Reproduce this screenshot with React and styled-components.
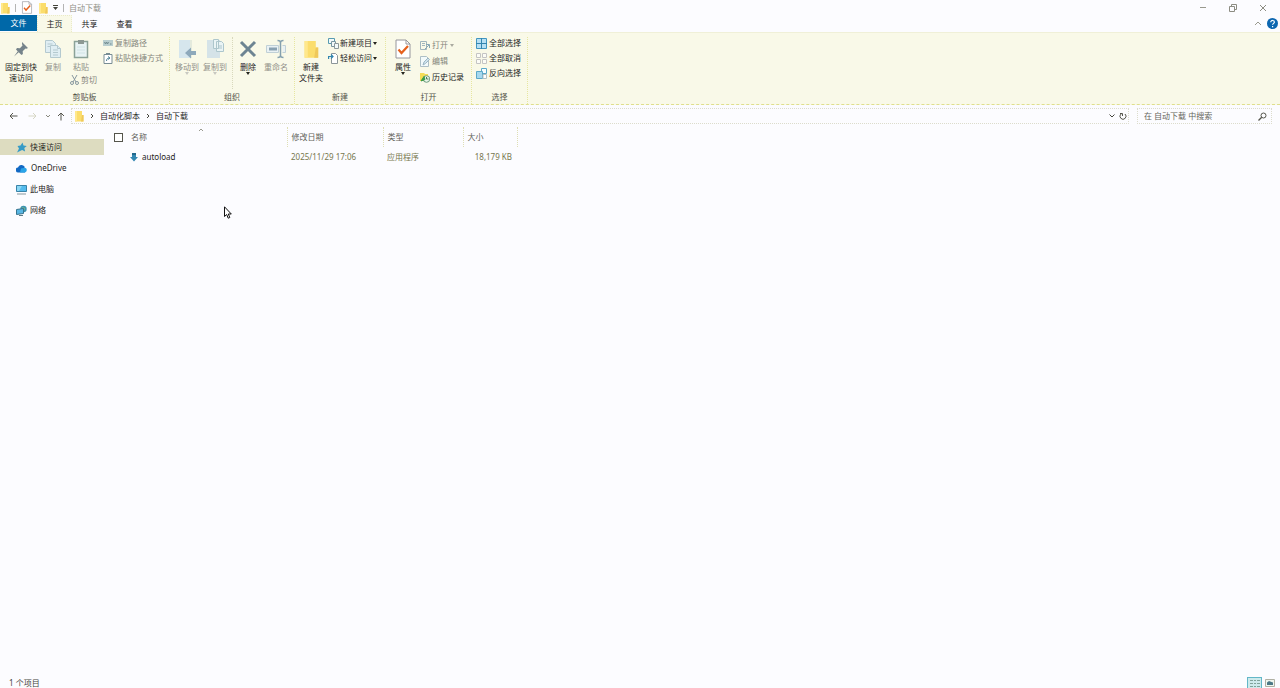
import React from "react";
import styled, { createGlobalStyle, css } from "styled-components";

const Global = createGlobalStyle`
  *, *::before, *::after { box-sizing: border-box; }
  body {
    margin: 0;
    background: #fcfcff;
    color: #24241c;
    font: 8px/12px "Noto Sans", "Noto Sans CJK SC", sans-serif;
  }
  button, input { font: inherit; color: inherit; }
  svg { display: block; flex: none; }
`;

const RIBBON = "#f9f9e8";
const LINE = "#eaeac8";

const Window = styled.div`
  display: flex;
  flex-direction: column;
  min-height: 100vh;
`;

const Plain = styled.button`
  display: flex;
  align-items: center;
  justify-content: center;
  margin: 0;
  padding: 0;
  border: 0;
  background: none;
  white-space: nowrap;
`;

const TitleBar = styled.header`
  display: flex;
  align-items: center;
  height: 15px;
  padding-right: 2px;
`;

const QuickBar = styled.div`
  display: flex;
  align-items: center;
  flex: 1;
  gap: 5px;
`;

const Divider = styled.span`
  width: 1px;
  height: 8px;
  background: #b4b4b4;
`;

const Title = styled.h1`
  margin: 0;
  font-size: 8px;
  font-weight: 400;
  color: #8f8f86;
`;

const WindowButton = styled(Plain)`
  width: 30px;
  height: 15px;
`;

const TabBar = styled.nav`
  display: flex;
  height: 17px;
`;

const Tab = styled(Plain)`
  width: 35px;
  height: 17px;
  ${(p) => p.$kind === "active" && css`
    background: ${RIBBON};
    border: 1px dotted ${LINE};
    border-bottom: 0;
  `}
  ${(p) => p.$kind === "file" && css`
    width: 37px;
    height: 16px;
    background: #0068a8;
    color: #fff;
  `}
`;

const TabTools = styled.div`
  display: flex;
  align-items: center;
  gap: 5px;
  margin-left: auto;
  padding-right: 2px;
`;

const Ribbon = styled.section`
  display: flex;
  height: 73px;
  padding-top: 4px;
  background: ${RIBBON};
  border-top: 1px solid #f0f0d8;
  border-bottom: 1px dashed #dfdf8c;
`;

const Group = styled.div`
  display: flex;
  flex-direction: column;
  flex: none;
  width: ${(p) => p.$width}px;
  border-right: 1px dotted #e6e6a0;
`;

const GroupBody = styled.div`
  display: flex;
  align-items: flex-start;
  height: 54px;
  padding-left: ${(p) => p.$pad}px;
`;

const GroupLabel = styled.div`
  color: #55554a;
  text-align: center;
`;

const Big = styled(Plain)`
  flex-direction: column;
  justify-content: flex-start;
  width: ${(p) => p.$width || 28}px;
  line-height: 11px;
  color: ${(p) => (p.disabled ? "#92928a" : "#24241c")};
`;

const BigIcon = styled.span`
  display: flex;
  align-items: center;
  justify-content: center;
  height: 24px;
`;

const Column = styled.div`
  display: flex;
  flex-direction: column;
  align-items: flex-start;
  gap: ${(p) => p.$gap}px;
  padding: ${(p) => p.$top || 0}px 0 0 ${(p) => p.$left || 0}px;
`;

const Small = styled(Plain)`
  height: 12px;
  gap: ${(p) => p.$gap ?? 2}px;
  color: ${(p) => (p.disabled ? "#85857b" : "#24241c")};
`;

const InnerLine = styled.span`
  height: 52px;
  margin: 0 1px 0 3px;
  border-left: 1px dotted #d8d8bc;
`;

const NavBar = styled.div`
  display: flex;
  align-items: center;
  height: 22px;
  padding: 0 8px 0 7px;
`;

const NavButton = styled(Plain)`
  width: ${(p) => p.$width || 12}px;
  height: 14px;
`;

const Address = styled.div`
  display: flex;
  align-items: center;
  flex: 1;
  height: 16px;
  margin: 0 8px 0 0;
  padding-left: 2px;
  border: 1px dotted #dcdccc;
`;

const Crumb = styled.a`
  color: inherit;
  text-decoration: none;
`;

const CrumbArrow = styled.span`
  display: flex;
  justify-content: center;
  width: 16px;
`;

const AddressTools = styled.div`
  display: flex;
  margin-left: auto;
`;

const Search = styled.label`
  display: flex;
  align-items: center;
  width: 135px;
  height: 16px;
  padding: 0 4px 0 6px;
  border: 1px dotted #dcdccc;
`;

const SearchInput = styled.input`
  flex: 1;
  min-width: 0;
  padding: 0;
  border: 0;
  outline: 0;
  background: none;
  &::placeholder { color: #66665c; opacity: 1; }
`;

const Main = styled.main`
  display: flex;
  flex: 1;
`;

const Sidebar = styled.nav`
  display: flex;
  flex-direction: column;
  gap: 5px;
  width: 104px;
  padding-top: 12px;
`;

const Place = styled.a`
  display: flex;
  align-items: center;
  gap: 3px;
  height: 16px;
  padding-left: 16px;
  color: inherit;
  text-decoration: none;
  background: ${(p) => (p.$active ? "#dddcc0" : "none")};
`;

const Files = styled.table`
  table-layout: fixed;
  width: 413px;
  border-collapse: collapse;
  align-self: flex-start;
`;

const HeadCell = styled.th`
  position: relative;
  width: ${(p) => p.$width}px;
  height: 20px;
  padding: 0 4px 0 ${(p) => p.$pad ?? 4}px;
  border-right: ${(p) => (p.$line ? "1px dotted #dedeb4" : "0")};
  font-weight: 400;
  text-align: left;
  color: #62625a;
`;

const SortMark = styled.span`
  position: absolute;
  top: 0;
  left: 67px;
`;

const Cell = styled.td`
  height: 20px;
  padding: 0 5px 0 ${(p) => p.$pad ?? 4}px;
  color: #77774e;
  text-align: ${(p) => p.$align || "left"};
  white-space: nowrap;
`;

const FileName = styled.span`
  display: flex;
  align-items: center;
  gap: 3px;
  color: #24241c;
`;

const Check = styled.input`
  appearance: none;
  display: block;
  width: 9px;
  height: 9px;
  margin: 0 0 0 10px;
  border: 1px solid #55554c;
  background: #fff;
`;

const StatusBar = styled.footer`
  display: flex;
  align-items: center;
  justify-content: space-between;
  height: 10px;
  padding: 0 4px 0 9px;
  color: #44443c;
`;

const ViewButtons = styled.div`
  display: flex;
  gap: 1px;
`;

const ViewButton = styled(Plain)`
  width: 13px;
  height: 12px;
  ${(p) => p.$active && css`
    width: 15px;
    border: 1px solid #63b7c8;
    background: #cdeaec;
  `}
`;

const Pointer = styled.svg`
  position: absolute;
  left: 224px;
  top: 206px;
`;

/* Icons */

const Stroke = ({ d, w = 8, h = 8, color = "#44443c", width = 1 }) => (
  <svg width={w} height={h} viewBox={`0 0 ${w} ${h}`} fill="none" stroke={color} strokeWidth={width}>
    <path d={d} />
  </svg>
);

const Caret = ({ color = "#24241c" }) => (
  <svg width="4" height="3" viewBox="0 0 4 3"><path d="M0 0h4L2 3z" fill={color} /></svg>
);

const Folder = ({ w = 10, h = 12 }) => (
  <svg width={w} height={h} viewBox="0 0 10 12">
    <path d="M1 1h7v4h1.500v6.500H1z" fill="#fbdd6c" />
    <path d="M8 5h1.500v6.500H7z" fill="#efc85a" />
    <path d="M1 1h2v10.500H1z" fill="#ffe88c" />
  </svg>
);

const CheckDoc = ({ w = 10, h = 12 }) => (
  <svg width={w} height={h} viewBox="0 0 16 20" fill="none">
    <path d="M1 1h10l4 4v14H1z" fill="#fff" stroke="#96969c" />
    <path d="M11 1v4h4" stroke="#96969c" />
    <path d="M3.500 10.500l3 3.500L13 7" stroke="#e5601c" strokeWidth="2.200" />
  </svg>
);

const Pin = () => (
  <svg width="16" height="16" viewBox="0 0 16 16" fill="#75838a">
    <path d="M9 1l6 6-1.500.8-1-.4-2.800 2.800.2 2.800-1.400 1L3 8.500l1-1.400 2.900.2L9.500 4.500 9 3z" />
    <path d="M5 10l1 1-5 4.500z" />
  </svg>
);

const CopyIcon = () => (
  <svg width="18" height="20" viewBox="0 0 18 20" stroke="#b4c9cf" fill="#e0eef3">
    <path d="M1.500 1.500h7l3 3v9h-10z" /><path d="M3.500 5h5M3.500 7.500h5" />
    <path d="M6.500 6.500h7l3 3v9h-10z" /><path d="M13.500 6.500v3h3M9 11h5M9 13.500h5M9 16h5" />
  </svg>
);

const PasteIcon = () => (
  <svg width="16" height="20" viewBox="0 0 16 20">
    <path d="M1.500 2.500h13v16h-13z" fill="#e8f3f4" stroke="#8ba298" strokeWidth="1.500" />
    <path d="M5 1h6v4H5z" fill="#8c9893" />
    <path d="M4 8h8M4 11h8M4 14h8" stroke="#d0e3e6" />
  </svg>
);

const MoveIcon = () => (
  <svg width="18" height="20" viewBox="0 0 18 20">
    <path d="M1 1h11v18H1z" fill="#d6e6ed" /><path d="M12 1h2v18h-2z" fill="#e4eadd" />
    <path d="M18 12h-5V8.500L7 14l6 5.500V16h5z" fill="#8ea9bb" />
  </svg>
);

const CopyToIcon = () => (
  <svg width="18" height="20" viewBox="0 0 18 20">
    <path d="M1 1h13v18H1z" fill="#d5e3e8" />
    <path d="M7.500.5h5v9h-5zM10.500 2.500h5l2 2v8h-7z" fill="#eaf4f5" stroke="#adc6cc" />
    <path d="M12 7h4M12 9h4" stroke="#adc6cc" />
  </svg>
);

const DeleteIcon = () => (
  <Stroke w={18} h={18} width={3} color="#6d8492" d="M2 2l14 14M16 2L2 16" />
);

const RenameIcon = () => (
  <svg width="20" height="20" viewBox="0 0 20 20" fill="none">
    <path d="M.5 6.500h12v7H.5zM16.500 6.500h3v7h-3" fill="#e9f1f4" stroke="#c0d0d6" />
    <path d="M3 8.500h8v3H3z" fill="#8aa2b2" />
    <path d="M11.500 1.500c2 0 3 .5 3 2v13c0 1.500-1 2-3 2M17.500 1.500c-2 0-3 .5-3 2M14.500 16.500c0 1.500 1 2 3 2" stroke="#84a0ae" strokeWidth="1.500" />
  </svg>
);

const PathIcon = () => (
  <svg width="10" height="8" viewBox="0 0 10 8"><path d="M0 1h10v6H0z" fill="#b9cecf" /><path d="M1.500 3l1 2 1-2 1 2 1-2M7 5h1.500" fill="none" stroke="#718b90" /></svg>
);

const ShortcutIcon = () => (
  <svg width="10" height="11" viewBox="0 0 10 11" fill="none"><path d="M1 1.500h8v9H1z" fill="#fff" stroke="#788d94" /><path d="M3 0h4v2H3z" fill="#788d94" /><path d="M3.500 8c0-2 1-3 3-3M5 3.500L7 5 5 6.500" stroke="#4d8296" /></svg>
);

const CutIcon = () => (
  <svg width="9" height="10" viewBox="0 0 9 10" fill="none" stroke="#87979f"><path d="M2 0l4 7M7 0L3 7" /><circle cx="2" cy="8" r="1.500" /><circle cx="7" cy="8" r="1.500" /></svg>
);

const NewItemIcon = () => (
  <svg width="11" height="11" viewBox="0 0 11 11" fill="#f2fafa"><path d="M.5.500h6v5h-6z" stroke="#589bb1" /><path d="M3.500 3.500h4v5h-4z" stroke="#7996a0" /><path d="M6.500 5.500h4v5h-4z" stroke="#8c989a" /></svg>
);

const EasyIcon = () => (
  <svg width="11" height="11" viewBox="0 0 11 11" fill="none"><path d="M3.500.5h4l2 2v8h-6z" fill="#fff" stroke="#8c9699" /><path d="M.6 6V3.500h4M3 1.500l2 2-2 2" stroke="#3286b0" strokeWidth="1.200" /></svg>
);

const OpenIcon = () => (
  <svg width="10" height="11" viewBox="0 0 10 11" fill="none"><path d="M.5 1.500h6v8h-6zM2 3.500h3M2 5.500h3" stroke="#a0b5bd" /><path d="M5 9l4-4M6 4.500h3.500V8" stroke="#86a6b4" /></svg>
);

const EditIcon = () => (
  <svg width="10" height="11" viewBox="0 0 10 11" fill="none"><path d="M.5.500h6l2 2v8h-8z" fill="#f2fafb" stroke="#adbfc6" /><path d="M3 9l1-3 4-4 1.500 1.500-4 4z" fill="#cee2ec" stroke="#9db7c4" /></svg>
);

const HistoryIcon = () => (
  <svg width="10" height="11" viewBox="0 0 10 11" fill="none"><path d="M0 1h4l1 1h3v7H0z" fill="#f4dc55" /><circle cx="6.500" cy="7" r="3.300" fill="#e9f5e7" stroke="#6f9d80" /><path d="M1 9l3-4.500 1 3z" fill="#3b9a48" stroke="#3b9a48" /><path d="M6.500 5v2h2" stroke="#4c7c5c" /></svg>
);

const SelectAllIcon = () => (
  <svg width="11" height="11" viewBox="0 0 11 11"><path d="M.5.500h10v10H.5z" fill="#b7e0f4" stroke="#4196c0" /><path d="M5.500 0v11M0 5.500h11" stroke="#3485ae" /></svg>
);

const SelectNoneIcon = () => (
  <svg width="11" height="11" viewBox="0 0 11 11" fill="#fcfcf6" stroke="#c4c4c4"><path d="M.5.500h4v4h-4zM6.500.5h4v4h-4zM.5 6.500h4v4h-4zM6.500 6.500h4v4h-4z" /></svg>
);

const InvertIcon = () => (
  <svg width="11" height="11" viewBox="0 0 11 11" stroke="#5ba8c9"><path d="M5.500.5h5v5h-5z" fill="#f5fcff" /><path d="M.5 3.500h6v7h-6z" fill="#a6d8ee" /><path d="M7 6.500h3.500v4H7z" fill="#fff" stroke="#b0c0c4" /></svg>
);

const QuickPin = () => (
  <svg width="11" height="11" viewBox="0 0 11 11"><path d="M6.500.5l1 3 3.300.4-2.500 2.200.8 3.400-3-1.500L1 10.500l2-4L1.500 4l3-.4z" fill="#369bc6" /></svg>
);

const Cloud = () => (
  <svg width="12" height="11" viewBox="0 0 12 11"><path d="M2.500 9.500A2.500 2.500 0 012 4.500a3.700 3.700 0 016.500-1L9 9.500z" fill="#1269c4" /><path d="M4 9.500l1-4 4-.8a2.500 2.500 0 010 4.800z" fill="#29a4e8" /></svg>
);

const Computer = () => (
  <svg width="11" height="11" viewBox="0 0 11 11"><path d="M.5 1.500h10v6H.5z" fill="#54bbed" stroke="#3983a8" /><path d="M1 2h5L3 7H1z" fill="#8bd7f5" /><path d="M1 10h9" stroke="#85979e" /></svg>
);

const Network = () => (
  <svg width="11" height="11" viewBox="0 0 11 11"><circle cx="7.500" cy="4" r="3.200" fill="#3d93b0" /><path d="M6 2l3 1-1 3z" fill="#7dbb88" /><path d="M.5 4.500l7-1v5l-7 1z" fill="#58b6e4" stroke="#37748e" /><path d="M3 10.500h4" stroke="#5c7985" /></svg>
);

const DownArrow = () => (
  <svg width="10" height="10" viewBox="0 0 10 10"><path d="M3 1h4v4h2L5 9.500 1 5h2z" fill="#3488b2" /><path d="M3 1h4v2H3z" fill="#22698e" /></svg>
);

const Up = "M1 5l3-3 3 3";
const Down = "M1.500 2.500L4 5l2.500-2.500";
const Right = "M3 2l2 2-2 2";

const places = [
  ["快速访问", QuickPin],
  ["OneDrive", Cloud],
  ["此电脑", Computer],
  ["网络", Network],
];

export default function App() {
  return (
    <>
      <Global />
      <Window>
        <TitleBar>
          <QuickBar>
            <Folder />
            <Divider />
            <Plain aria-label="属性"><CheckDoc w={12} h={13} /></Plain>
            <Plain aria-label="新建文件夹"><Folder /></Plain>
            <Plain aria-label="自定义快速访问工具栏">
              <svg width="5" height="6" viewBox="0 0 5 6"><path d="M0 0h5v1H0zM0 2h5L2.500 5z" fill="#44443c" /></svg>
            </Plain>
            <Divider />
            <Title>自动下载</Title>
          </QuickBar>
          <WindowButton aria-label="最小化"><Stroke color="#99998e" d="M1 3.500h6" /></WindowButton>
          <WindowButton aria-label="还原"><Stroke color="#8c8c82" d="M.5 2.500h5v5h-5zM2.500 2V.5h5v5H6" /></WindowButton>
          <WindowButton aria-label="关闭"><Stroke color="#8c8c82" d="M1 1l6 6M7 1L1 7" /></WindowButton>
        </TitleBar>

        <TabBar>
          <Tab $kind="file">文件</Tab>
          <Tab $kind="active">主页</Tab>
          <Tab>共享</Tab>
          <Tab>查看</Tab>
          <TabTools>
            <Plain aria-label="最小化功能区"><Stroke color="#99998e" d={Up} /></Plain>
            <Plain aria-label="帮助">
              <svg width="11" height="11" viewBox="0 0 11 11" fill="none">
                <circle cx="5.500" cy="5.500" r="5.500" fill="#0c66b0" />
                <path d="M3.800 4.200c0-2.400 3.600-2.200 3.600 0 0 1.200-1.800 1.200-1.800 2.600M5.600 8v1.200" stroke="#fff" strokeWidth="1.200" />
              </svg>
            </Plain>
          </TabTools>
        </TabBar>

        <Ribbon>
          <Group $width={170}>
            <GroupBody $pad={3}>
              <Big $width={36}><BigIcon><Pin /></BigIcon>固定到快<br />速访问</Big>
              <Big disabled><BigIcon><CopyIcon /></BigIcon>复制</Big>
              <Column $gap={2}>
                <Big disabled><BigIcon><PasteIcon /></BigIcon>粘贴</Big>
                <Column $left={3}><Small disabled><CutIcon />剪切</Small></Column>
              </Column>
              <Column $gap={3} $left={6}>
                <Small disabled><PathIcon />复制路径</Small>
                <Small disabled><ShortcutIcon />粘贴快捷方式</Small>
              </Column>
            </GroupBody>
            <GroupLabel>剪贴板</GroupLabel>
          </Group>

          <Group $width={125}>
            <GroupBody $pad={3}>
              <Big disabled><BigIcon><MoveIcon /></BigIcon>移动到<Caret color="#c8c8c0" /></Big>
              <Big disabled><BigIcon><CopyToIcon /></BigIcon>复制到<Caret color="#c8c8c0" /></Big>
              <InnerLine />
              <Big><BigIcon><DeleteIcon /></BigIcon>删除<Caret /></Big>
              <Big disabled><BigIcon><RenameIcon /></BigIcon>重命名</Big>
            </GroupBody>
            <GroupLabel>组织</GroupLabel>
          </Group>

          <Group $width={91}>
            <GroupBody $pad={2}>
              <Big><BigIcon><Folder w={16} h={20} /></BigIcon>新建<br />文件夹</Big>
              <Column $gap={3} $left={3}>
                <Small $gap={1}><NewItemIcon />新建项目 <Caret /></Small>
                <Small $gap={1}><EasyIcon />轻松访问 <Caret /></Small>
              </Column>
            </GroupBody>
            <GroupLabel>新建</GroupLabel>
          </Group>

          <Group $width={86}>
            <GroupBody $pad={3}>
              <Big><BigIcon><CheckDoc w={16} h={20} /></BigIcon>属性<Caret /></Big>
              <Column $gap={4} $top={2} $left={3}>
                <Small disabled><OpenIcon />打开<Caret color="#aaaaa0" /></Small>
                <Small disabled><EditIcon />编辑</Small>
                <Small><HistoryIcon />历史记录</Small>
              </Column>
            </GroupBody>
            <GroupLabel>打开</GroupLabel>
          </Group>

          <Group $width={56}>
            <GroupBody $pad={4}>
              <Column $gap={3}>
                <Small><SelectAllIcon />全部选择</Small>
                <Small><SelectNoneIcon />全部取消</Small>
                <Small><InvertIcon />反向选择</Small>
              </Column>
            </GroupBody>
            <GroupLabel>选择</GroupLabel>
          </Group>
        </Ribbon>

        <NavBar>
          <NavButton aria-label="后退"><Stroke color="#55554c" w={9} h={8} d="M8.500 4H1M4 1L1 4l3 3" /></NavButton>
          <NavButton $width={26} aria-label="前进"><Stroke color="#d6d6c4" w={9} h={8} d="M.5 4H8M5 1l3 3-3 3" /></NavButton>
          <NavButton $width={6} aria-label="最近浏览的位置"><Stroke w={6} h={8} color="#88887e" d="M1 3l2 2 2-2" /></NavButton>
          <NavButton $width={20} aria-label="上移"><Stroke w={8} h={9} color="#55554c" d="M4 8.500V1M1 4l3-3 3 3" /></NavButton>
          <Address>
            <Folder />
            <CrumbArrow><Stroke d={Right} /></CrumbArrow>
            <Crumb href="#scripts">自动化脚本</Crumb>
            <CrumbArrow><Stroke d={Right} /></CrumbArrow>
            <Crumb href="#downloads">自动下载</Crumb>
            <AddressTools>
              <NavButton aria-label="以前的位置"><Stroke d={Down} /></NavButton>
              <NavButton $width={10} aria-label="刷新"><Stroke d="M2 2a3 3 0 104 0M1 1.500h2.500V4" color="#55554c" /></NavButton>
            </AddressTools>
          </Address>
          <Search>
            <SearchInput type="text" aria-label="搜索" placeholder="在 自动下载 中搜索" />
            <svg width="9" height="9" viewBox="0 0 9 9" fill="none" stroke="#55554c"><circle cx="5.500" cy="3.500" r="2.500" /><path d="M3.700 5.300L.5 8.500" strokeWidth="1.300" /></svg>
          </Search>
        </NavBar>

        <Main>
          <Sidebar>
            {places.map(([name, Icon], i) => (
              <Place key={name} href={`#place-${i}`} $active={i === 0}><Icon />{name}</Place>
            ))}
          </Sidebar>
          <Files>
            <thead>
              <tr>
                <HeadCell $width={27} $pad={0}><Check type="checkbox" aria-label="全选" /></HeadCell>
                <HeadCell $width={156} $pad={0} $line>名称<SortMark><Stroke color="#99998e" w={6} h={5} d="M1 4l2-2 2 2" /></SortMark></HeadCell>
                <HeadCell $width={96} $line>修改日期</HeadCell>
                <HeadCell $width={80} $line>类型</HeadCell>
                <HeadCell $width={54} $line>大小</HeadCell>
              </tr>
            </thead>
            <tbody>
              <tr>
                <Cell colSpan={2} $pad={25}><FileName><DownArrow />autoload</FileName></Cell>
                <Cell>2025/11/29 17:06</Cell>
                <Cell>应用程序</Cell>
                <Cell $align="right">18,179 KB</Cell>
              </tr>
            </tbody>
          </Files>
        </Main>

        <StatusBar>
          <span>1 个项目</span>
          <ViewButtons>
            <ViewButton $active aria-label="详细信息">
              <svg width="12" height="10" viewBox="0 0 12 10" stroke="#7fa39a"><path d="M1 2.500h3M1 5.500h3M1 8.500h3M5 2.500h2M5 5.500h2M5 8.500h2M8 2.500h3M8 5.500h3M8 8.500h3" /></svg>
            </ViewButton>
            <ViewButton aria-label="大缩略图">
              <svg width="10" height="8" viewBox="0 0 10 8"><path d="M.5.500h9v7h-9z" fill="#eef5ee" stroke="#b0b0a4" /><path d="M2 3.500l2-1.500 4 1.500V6H2z" fill="#4c7886" /></svg>
            </ViewButton>
          </ViewButtons>
        </StatusBar>
      </Window>
      <Pointer width="8" height="13" viewBox="0 0 8 13" fill="#fff" stroke="#111"><path d="M.5.800v9.700l2.200-2 1.500 3.700 1.600-.7-1.500-3.500h3z" /></Pointer>
    </>
  );
}
